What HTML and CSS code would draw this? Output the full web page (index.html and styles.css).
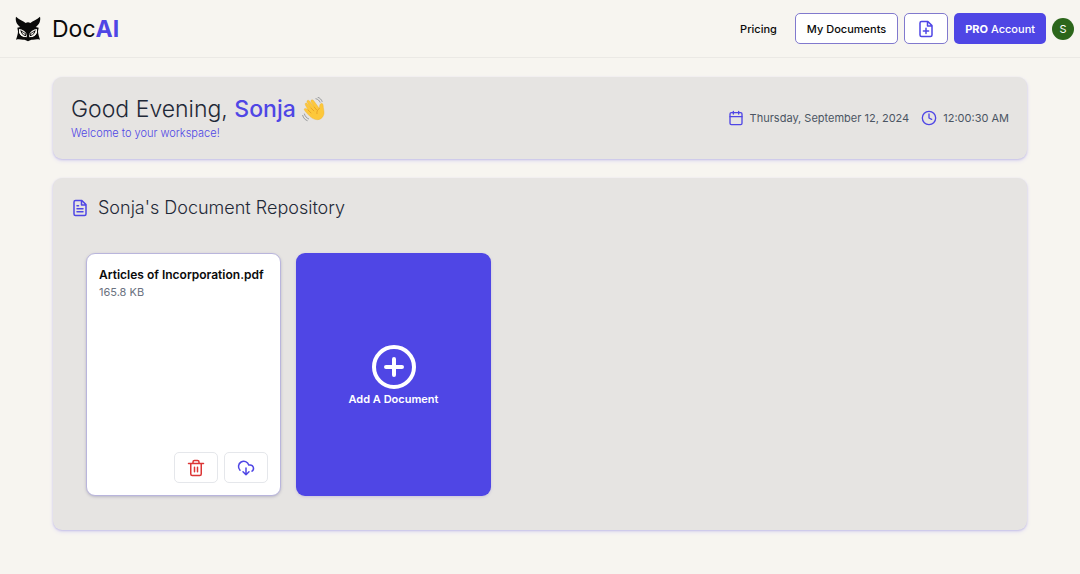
FILE: index.html
```html
<!DOCTYPE html>
<html lang="en">
<head>
<meta charset="utf-8">
<meta name="viewport" content="width=device-width, initial-scale=1">
<title>DocAI</title>
<link rel="stylesheet" href="styles.css">
</head>
<body>
<header class="topbar">
  <a class="brand" href="#">
    <svg class="brand-mark" viewBox="0 0 78 78" aria-hidden="true">
      <path fill="#0a0a0a" d="M3 2C13 12 24 14 32 21C37 18 41 18 46 21C54 14 65 12 75 2C78 15 72 26 62 33L71 35L69 46C69 54 72 62 75 71C67 68 61 70 54 71C48 71 43 73 39 76C35 73 30 71 24 71C17 70 11 68 3 71C6 62 9 54 9 46L7 35L16 33C6 26 0 15 3 2Z"/>
      <path fill="#f7f5f0" d="M12 39C23 40 33 47 36 57L35 64C26 66 15 60 12 50ZM66 39C55 40 45 47 42 57L43 64C52 66 63 60 66 50Z"/>
      <path fill="#0a0a0a" d="M16 42L35 54L33 60C25 60 18 53 16 42ZM62 42L43 54L45 60C53 60 60 53 62 42Z"/>
      <path fill="#f7f5f0" d="M21 47L32 55C29 58 23 56 21 47ZM57 47L46 55C49 58 55 56 57 47Z"/>
      <path fill="none" stroke="#0a0a0a" stroke-width="3" d="M12 54C16 62 24 66 34 65M66 54C62 62 54 66 44 65"/>
    </svg>
    <span>Doc<b>AI</b></span>
  </a>
  <nav class="nav">
    <a class="nav-link" href="#">Pricing</a>
    <button class="btn btn-outline" type="button">My Documents</button>
    <button class="btn btn-outline btn-icon" type="button" aria-label="New document">
      <svg class="icon icon-md" viewBox="0 0 24 24" aria-hidden="true"><path d="M14.500 2H6a2 2 0 0 0-2 2v16a2 2 0 0 0 2 2h12a2 2 0 0 0 2-2V7.500L14.500 2zM14 2v6h6M12 11v7M8.500 14.500h7"/></svg>
    </button>
    <button class="btn btn-primary" type="button"><b>PRO</b>&nbsp;Account</button>
    <button class="avatar" type="button" aria-label="Account menu">S</button>
  </nav>
</header>
<main class="page">
  <section class="panel greeting">
    <div>
      <h1 class="hello"><span>Good Evening, <strong>Sonja</strong></span>
        <svg class="wave" viewBox="0 0 72 72" role="img" aria-label="Waving hand">
          <path d="M17 50C9 41 5 37 7 34C10 31 14 34 18 38L10 24C7 18 12 15 16 20L27 33L15 16C12 10 18 7 22 12L36 30L26 14C24 8 30 6 34 11L50 33C51 28 50 23 53 20C57 16 61 19 61 26C62 38 67 48 59 58C48 71 31 66 17 50Z" fill="#fdc83b" stroke="#e9a92c" stroke-width="1"/>
          <path d="M18 38L26 46M27 33L34 40M36 30L42 37M50 33C44 37 42 42 43 48" fill="none" stroke="#e0931f" stroke-width="2" stroke-linecap="round"/>
          <path d="M40 5C46 6 50 10 52 15M46 1C52 3 56 7 58 13M7 49C9 56 13 60 19 63M2 53C4 61 9 66 15 68" fill="none" stroke="#777b80" stroke-width="2" stroke-linecap="round"/>
        </svg>
      </h1>
      <p class="welcome">Welcome to your workspace!</p>
    </div>
    <div class="moment">
      <span class="moment-item">
        <svg class="icon" viewBox="0 0 24 24" aria-hidden="true"><rect x="3" y="4" width="18" height="18" rx="2"/><path d="M8 2v4M16 2v4M3 10h18"/></svg>
        <time datetime="2024-09-12">Thursday, September 12, 2024</time>
      </span>
      <span class="moment-item">
        <svg class="icon" viewBox="0 0 24 24" aria-hidden="true"><circle cx="12" cy="12" r="10"/><path d="M12 6v6l4 2"/></svg>
        <time>12:00:30 AM</time>
      </span>
    </div>
  </section>
  <section class="panel repository">
    <h2 class="repo-title">
      <svg class="icon icon-md" viewBox="0 0 24 24" aria-hidden="true"><path d="M14.500 2H6a2 2 0 0 0-2 2v16a2 2 0 0 0 2 2h12a2 2 0 0 0 2-2V7.500L14.500 2zM14 2v6h6M8 9h2M8 13h8M8 17h8"/></svg>
      Sonja's Document Repository
    </h2>
    <div class="documents">
      <article class="doc">
        <div>
          <h3 class="doc-name">Articles of Incorporation.pdf</h3>
          <p class="doc-size">165.8 KB</p>
        </div>
        <div class="doc-actions">
          <button class="btn btn-plain btn-icon" type="button" aria-label="Delete">
            <svg class="icon icon-md icon-danger" viewBox="0 0 24 24" aria-hidden="true"><path d="M2 6h20M19 6v14a2 2 0 0 1-2 2H7a2 2 0 0 1-2-2V6M8 6V4a2 2 0 0 1 2-2h4a2 2 0 0 1 2 2v2M10 11v6M14 11v6"/></svg>
          </button>
          <button class="btn btn-plain btn-icon" type="button" aria-label="Download">
            <svg class="icon icon-md" viewBox="0 0 24 24" aria-hidden="true"><path d="M4 14.900A7 7 0 1 1 15.710 8h1.790a4.500 4.500 0 0 1 2.500 8.240M12 12v9M8 17l4 4 4-4"/></svg>
          </button>
        </div>
      </article>
      <button class="add" type="button">
        <svg class="add-icon" viewBox="0 0 24 24" aria-hidden="true"><circle cx="12" cy="12" r="10"/><path d="M8 12h8M12 8v8"/></svg>
        Add A Document
      </button>
    </div>
  </section>
</main>
</body>
</html>
```
FILE: styles.css
```css
* { box-sizing: border-box; }

body {
  margin: 0;
  min-height: 100vh;
  background: #f7f5f0;
  color: #0a0a0a;
  font-family: Inter, "Liberation Sans", sans-serif;
  font-size: 11px;
  line-height: 16px;
}

h1, h2, h3, p { margin: 0; }
button { font: inherit; cursor: pointer; }
a { color: inherit; text-decoration: none; }

.topbar {
  display: flex;
  align-items: center;
  justify-content: space-between;
  height: 58px;
  padding: 0 6px 0 15px;
  border-bottom: 1px solid #ebe9e5;
}

.brand {
  display: flex;
  align-items: center;
  gap: 11px;
  font-size: 23px;
  line-height: 28px;
}
.brand b { color: #4f46e5; font-weight: 700; }
.brand-mark { width: 26px; height: 26px; }

.nav { display: flex; align-items: center; gap: 6px; }
.nav-link { margin-right: 12px; font-weight: 500; }

.btn {
  display: inline-flex;
  align-items: center;
  justify-content: center;
  height: 31px;
  padding: 0 11px;
  border: 1px solid transparent;
  border-radius: 5px;
  font-weight: 500;
}
.btn-outline { background: #fff; border-color: #8179ce; color: #0a0a0a; }
.btn-plain { background: #fff; border-color: #e5e7eb; }
.btn-primary { background: #4f46e5; color: #fff; padding: 0 10px; }
.btn-icon { width: 44px; padding: 0; }

.avatar {
  width: 22px;
  height: 22px;
  padding: 0;
  border: 0;
  border-radius: 50%;
  background: #2c661b;
  color: #fff;
}

.icon {
  flex: none;
  width: 16px;
  height: 16px;
  fill: none;
  stroke: #4f46e5;
  stroke-width: 2;
  stroke-linecap: round;
  stroke-linejoin: round;
}
.icon-md { width: 18px; height: 18px; }
.icon-danger { stroke: #dc3636; }

.page {
  display: grid;
  gap: 19px;
  padding: 19px 53px;
}

.panel {
  border-radius: 9px;
  background: #e6e4e2;
  box-shadow: 0 1px 2px #c7c2e8, 0 2px 4px #e4dff2;
}

.greeting {
  display: flex;
  align-items: center;
  justify-content: space-between;
  padding: 18px 18px;
}
.hello {
  display: flex;
  align-items: center;
  gap: 6px;
  color: #1f2937;
  font-size: 23px;
  font-weight: 300;
  line-height: 28px;
}
.hello strong { color: #4f46e5; font-weight: 500; }
.wave { width: 25px; height: 25px; }
.welcome { margin-top: 2px; color: #4f46e5; font-weight: 300; }

.moment { display: flex; gap: 12px; color: #4b5563; }
.moment-item { display: flex; align-items: center; gap: 6px; }

.repository { padding: 18px 18px 34px; }
.repo-title {
  display: flex;
  align-items: center;
  gap: 9px;
  color: #1f2937;
  font-size: 18px;
  font-weight: 300;
  line-height: 24px;
}

.documents {
  display: grid;
  grid-template-columns: repeat(auto-fill, 195px);
  grid-auto-rows: 243px;
  gap: 15px;
  margin-top: 33px;
  padding: 0 15px;
}
.doc {
  display: flex;
  flex-direction: column;
  justify-content: space-between;
  padding: 12px;
  border: 1px solid #b9b5dc;
  border-radius: 9px;
  background: #fff;
  box-shadow: 0 1px 3px #b9b7c4;
}
.doc-name { font-size: 12px; font-weight: 600; line-height: 18px; }
.doc-size { color: #6b7280; }
.doc-actions { display: flex; justify-content: flex-end; gap: 6px; }

.add {
  display: flex;
  flex-direction: column;
  align-items: center;
  justify-content: center;
  padding: 0;
  border: 0;
  border-radius: 9px;
  background: #4f46e5;
  box-shadow: 0 1px 3px #c9c4dd;
  color: #fff;
  font-weight: 600;
}
.add-icon {
  width: 48px;
  height: 48px;
  overflow: visible;
  fill: none;
  stroke: currentColor;
  stroke-width: 2;
  stroke-linecap: round;
}
```
